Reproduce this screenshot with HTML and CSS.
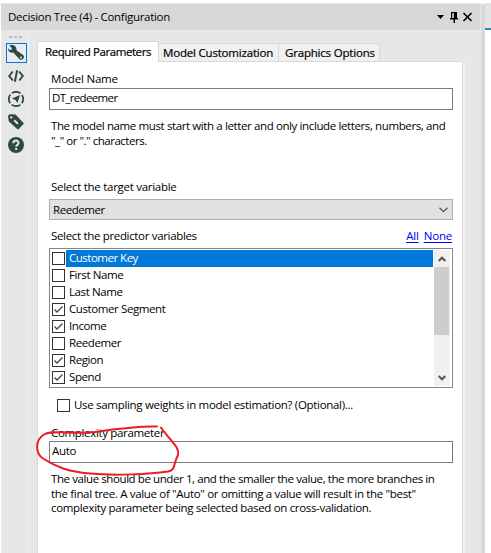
FILE: index.html
```html
<!DOCTYPE html>
<html lang="en">
<head>
<meta charset="utf-8">
<title>Decision Tree (4) - Configuration</title>
<link rel="stylesheet" href="styles.css">
</head>
<body>
<div class="app">
  <section class="dock">
    <header class="titlebar">
      <h1 class="t-title">Decision Tree (4) - Configuration</h1>
      <svg class="window-tools" width="38" height="14" viewBox="0 0 38 14">
        <path d="M1 5h7L4.500 9z"/>
        <path d="M15 2h6v6h1v1.500h-3V13h-1.500V9.500H14V8h1zM16.200 3v5h1.600V3z" fill-rule="evenodd"/>
        <path d="M27.500 3l8 8M35.500 3l-8 8" fill="none" stroke="#000" stroke-width="1.700"/>
      </svg>
    </header>
    <div class="body">
      <nav class="rail">
        <span class="grip"><i></i><i></i><i></i></span>
        <a class="tool active"><svg viewBox="0 0 16 16"><path d="M1.200 .4L4 3.200 3.500 4.800 1 4.800 0 3C-.4 6.700 2.500 8.300 5.200 7.600l5.400 5.600a2.800 2.800 0 1 0 3.400-3.900L8.500 5.200C9 1.600 5.500-.8 2.700.1zM13 11.500a1 1 0 1 1-.1 2 1 1 0 0 1 .1-2z" fill-rule="evenodd"/></svg></a>
        <a class="tool"><svg viewBox="0 0 16 16"><path d="M4.800 3.500L1.200 8l3.600 4.500M11.200 3.500l3.600 4.500-3.600 4.500M9.200 2.200L6.800 13.800" fill="none" stroke="#2f4747" stroke-width="2"/></svg></a>
        <a class="tool"><svg viewBox="0 0 16 16"><circle cx="8" cy="8" r="7.200" fill="none" stroke="#2f4747" stroke-width="1.700" stroke-dasharray="9.300 2.010" stroke-dashoffset="4.650"/><path d="M12 4L9.500 12 7.500 9 4 7.500z"/></svg></a>
        <a class="tool"><svg viewBox="0 0 16 16"><path d="M0 2L1.500 .3 7.500 .5 16 9.500 10 15.800 .8 7.500zM3.200 2.200a1.200 1.200 0 1 0 .1 2.400 1.200 1.200 0 0 0-.1-2.400zM7 5.600L5.600 7l3.600 3.600 1.400-1.400z" fill-rule="evenodd"/></svg></a>
        <a class="tool"><svg viewBox="0 0 16 16"><circle cx="8" cy="8" r="8"/><path d="M5.300 6.300C5.300 2.600 10.700 2.800 10.600 6 10.500 7.700 8.200 7.600 8.200 9.800M8.200 11v2" fill="none" stroke="#e7e7e7" stroke-width="2"/></svg></a>
      </nav>
      <main class="content">
        <div class="tabs">
          <span class="tab current"><b class="t-tab1">Required Parameters</b></span>
          <span class="tab second"><b class="t-tab2">Model Customization</b></span>
          <span class="tab third"><b class="t-tab3">Graphics Options</b></span>
        </div>
        <div class="panel">
          <label class="caption name-cap"><b class="t-name">Model Name</b></label>
          <div class="field"><b class="t-dt">DT_redeemer</b></div>
          <p class="hint"><b class="t-h1">The model name must start with a letter and only include letters, numbers, and</b><br><b class="t-h2">"_" or "." characters.</b></p>
          <label class="caption target-cap"><b class="t-target">Select the target variable</b></label>
          <div class="select"><b class="t-reed">Reedemer</b><svg width="9" height="6" viewBox="0 0 9 6"><path d="M.5 .7l4 4 4-4"/></svg></div>
          <div class="caption pred-cap"><b class="t-pred">Select the predictor variables</b><span class="links"><a class="t-all">All</a><a class="t-none">None</a></span></div>
          <div class="list">
            <ul>
              <li class="selected"><i class="box"></i><span class="l-key">Customer Key</span></li>
              <li><i class="box"></i><span class="l-first">First Name</span></li>
              <li><i class="box"></i><span class="l-last">Last Name</span></li>
              <li><i class="box"><svg viewBox="0 0 11 11"><path d="M1.500 5.500L4 8l5.500-5.500"/></svg></i><span class="l-seg">Customer Segment</span></li>
              <li><i class="box"><svg viewBox="0 0 11 11"><path d="M1.500 5.500L4 8l5.500-5.500"/></svg></i><span class="l-inc">Income</span></li>
              <li><i class="box"></i><span class="l-reed">Reedemer</span></li>
              <li><i class="box"><svg viewBox="0 0 11 11"><path d="M1.500 5.500L4 8l5.500-5.500"/></svg></i><span class="l-reg">Region</span></li>
              <li><i class="box"><svg viewBox="0 0 11 11"><path d="M1.500 5.500L4 8l5.500-5.500"/></svg></i><span class="l-sp">Spend</span></li>
            </ul>
            <div class="scroll">
              <span class="arrow"><svg width="8" height="6" viewBox="0 0 8 6"><path d="M.7 5L4 1.700 7.300 5"/></svg></span>
              <span class="thumb"></span>
              <span class="arrow down"><svg width="8" height="6" viewBox="0 0 8 6"><path d="M.7 1L4 4.300 7.300 1"/></svg></span>
            </div>
          </div>
          <label class="check"><i class="box"></i><b class="t-use">Use sampling weights in model estimation? (Optional)...</b></label>
          <label class="caption cp-cap"><b class="t-cp">Complexity parameter</b></label>
          <div class="field"><b class="t-auto">Auto</b></div>
          <p class="hint"><b class="t-f1">The value should be under 1, and the smaller the value, the more branches in</b><br><b class="t-f2">the final tree. A value of "Auto" or omitting a value will result in the "best"</b><br><b class="t-f3">complexity parameter being selected based on cross-validation.</b></p>
        </div>
      </main>
    </div>
  </section>
  <div class="splitter"></div>
  <aside class="canvas"></aside>
  <svg class="ink" width="160" height="60" viewBox="30 420 160 60"><path d="M157 426.500C135 426 115 429 95 432 73 434.500 52 429.500 44 434.500 35 440 35 453 43 458.500 56 467 68 471.500 90 473.500 115 476 150 474 168 471.500 176 470 173 464 178 455 180 447 171 442 161 427.500"/></svg>
</div>
</body>
</html>
```
FILE: styles.css
```css
* { box-sizing: border-box; }
body { margin: 0; background: #fff; color: #000; font: 11.5px/15px "Open Sans", "Noto Sans", sans-serif; letter-spacing: -0.33px; overflow: hidden; }
b, h1 { font: inherit; font-weight: 400; }
h1, p, ul { margin: 0; padding: 0; }
b, h1, li span, .links a { white-space: nowrap; }
.app { display: flex; height: 553px; padding: 3px 0 0 1px; position: relative; }
.dock { width: 480px; background: #e7e7e7; display: flex; flex-direction: column; padding-top: 1px; }
.titlebar { height: 26px; width: 479px; background: #d8d8d8; display: flex; align-items: center; justify-content: space-between; padding: 0 6px 0 7px; }
.t-title { letter-spacing: -0.3px; padding-bottom: 1px; }
.body { flex: 1; display: flex; }
.rail { width: 28px; margin-top: 3px; border-right: 1px solid #f2f2f2; display: flex; flex-direction: column; align-items: center; padding-left: 4px; }
.grip { display: flex; gap: 2px; height: 10px; padding: 3px 2px 0 0; }
.grip i { width: 3px; height: 2px; background: #bbb; }
.tool { width: 21px; height: 20px; margin-bottom: 3px; display: flex; align-items: center; justify-content: center; padding-right: 2px; }
.tool.active { border: 1px solid #0078d7; background: #e9edf0; padding-right: 1px; }
.tool svg { width: 16px; height: 16px; fill: #2f4747; flex: none; }
.content { width: 428px; margin-left: 8px; display: flex; flex-direction: column; padding-top: 11px; }
.tabs { display: flex; align-items: flex-end; height: 20px; }
.tab { height: 18px; background: #f0f0f0; border: 1px solid #d9d9d9; border-width: 1px 1px 0 0; line-height: 18px; padding-left: 4px; -webkit-text-stroke: 0.2px; }
.tab.current { width: 122px; height: 21px; margin-bottom: -1px; background: #fff; border-left-width: 1px; padding-left: 7px; line-height: 19px; position: relative; }
.second { width: 120px; }
.third { width: 101px; padding-left: 6px; }
.t-tab1 { letter-spacing: -0.42px; }
.t-tab2, .t-tab3 { letter-spacing: -0.19px; }
.panel { flex: 1; background: #fff; border: 1px solid #d9d9d9; border-width: 1px 1px 0; box-shadow: 2px 0 #f0f0f0; width: 426px; padding: 9px 9px 0 11px; }
.caption { display: flex; height: 16px; padding-left: 2px; line-height: 15px; }
.name-cap { height: 17px; letter-spacing: -0.2px; }
.field { height: 22px; border: 1px solid #7a7a7a; padding-left: 2px; line-height: 17px; }
.t-dt { letter-spacing: -0.65px; }
.t-h1 { letter-spacing: -0.385px; }
.t-h2 { letter-spacing: -0.48px; }
.t-f1 { letter-spacing: -0.41px; }
.hint { padding: 9px 0 0 2px; line-height: 14.500px; }
.target-cap { margin-top: 31px; height: 20px; letter-spacing: -0.28px; }
.select { height: 21px; border: 1px solid #adadad; background: #e1e1e1; padding: 0 4px 0 3px; display: flex; align-items: center; justify-content: space-between; letter-spacing: -0.45px; }
.pred-cap { margin-top: 8px; height: 20px; justify-content: space-between; }
.links { display: flex; gap: 5px; padding-right: 1px; color: #0000f0; letter-spacing: -0.2px; }
.links a { text-decoration: underline; text-underline-offset: 2px; }
.select path, .arrow path { fill: none; stroke: #555; stroke-width: 1.300; }
.arrow path { stroke-width: 2; }
.list { height: 140px; border: 1px solid #828790; display: flex; padding: 1px; }
ul { flex: 1; list-style: none; padding-left: 1px; margin-right: 1px; }
li { display: flex; height: 17px; align-items: center; }
.box { width: 13px; height: 13px; border: 1px solid #333; background: #fff; flex: none; display: block; }
.box svg { display: block; width: 11px; height: 11px; }
.box path { fill: none; stroke: #444; stroke-width: 1.300; }
li span { flex: 1; height: 17px; margin-left: 1px; padding-left: 3px; line-height: 15px; letter-spacing: -0.4px; }
.l-key { letter-spacing: -0.5px; }
.selected span { background: #0078d7; color: #fff; }
.scroll { width: 16px; margin-right: 1px; background: #f0f0f0; display: flex; flex-direction: column; }
.arrow { height: 17px; display: flex; align-items: center; justify-content: center; }
.arrow.down { margin-top: auto; }
.thumb { height: 68px; width: 15px; background: #cdcdcd; }
.check { display: flex; align-items: center; gap: 4px; height: 15px; margin: 10px 0 0 8px; }
.t-use { letter-spacing: -0.31px; padding-bottom: 2px; }
.cp-cap { margin-top: 12px; }
.splitter { width: 4px; margin-top: 1px; background: #d9d9d9; }
.canvas { width: 6px; height: 27px; background: #e4e4e4; border-bottom: 2px solid #1e8fc6; }
.ink { position: absolute; left: 30px; top: 420px; fill: none; stroke: #ed1c24; stroke-width: 2; stroke-linecap: round; stroke-linejoin: round; }
```
